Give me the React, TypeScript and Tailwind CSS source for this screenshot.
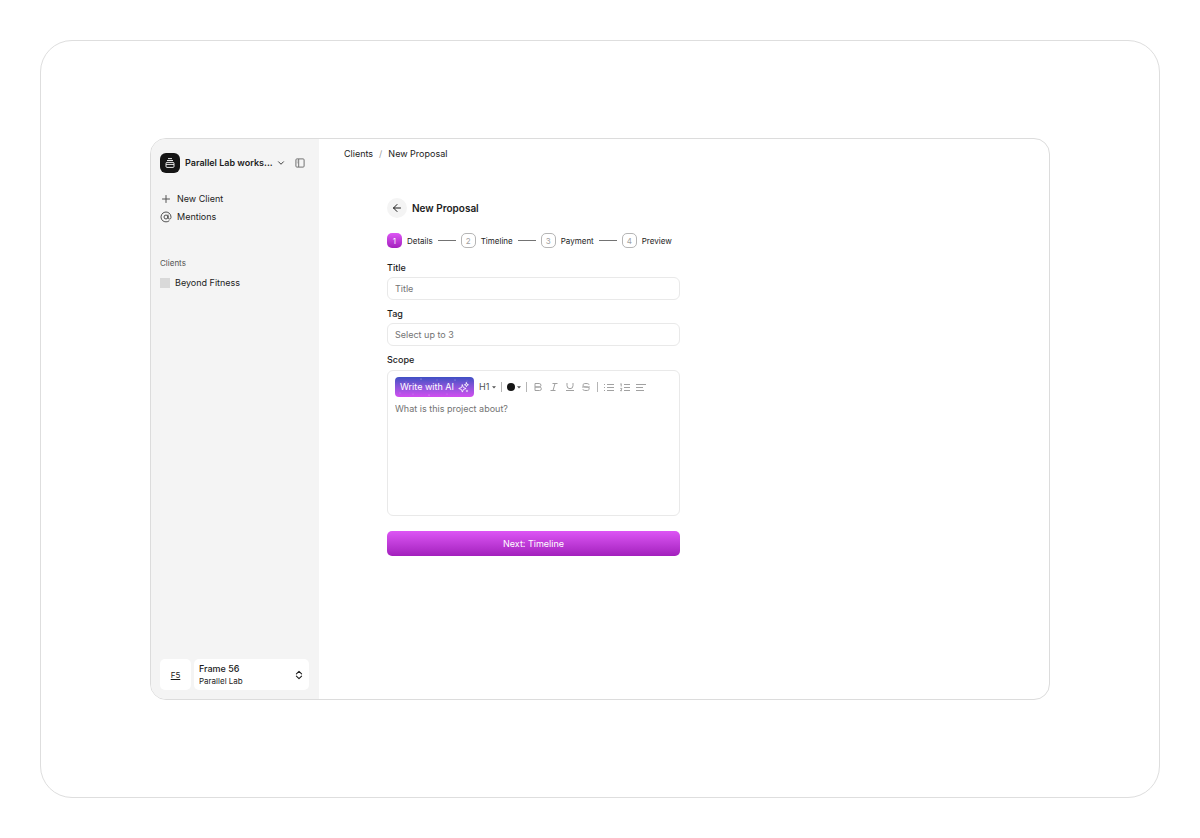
import React from "react";
import { ArrowLeft, AtSign, ChevronDown, Plus } from "lucide-react";

const steps = [
  { id: 1, label: "Details" },
  { id: 2, label: "Timeline" },
  { id: 3, label: "Payment" },
  { id: 4, label: "Preview" },
];

const formats = [
  {
    name: "Bold",
    icon: <path d="M2 1.5h4.2a1.75 1.75 0 0 1 0 3.5H2zM2 5h4.6a1.75 1.75 0 0 1 0 3.5H2z" />,
  },
  { name: "Italic", icon: <path d="M3.5 1.5h5M1.5 8.5h5M6 1.5l-2 7" /> },
  {
    name: "Underline",
    icon: <path d="M2 1v2.7a3 3 0 0 0 6 0V1M1 8.5h8" />,
  },
  {
    name: "Strikethrough",
    icon: (
      <path d="M8 2.8C7.8 1.8 7 1.5 5 1.5 3.2 1.5 2 1.8 2 3.1S3.2 5 5 5s3.2.4 3.2 1.8S7 8.5 5 8.5s-3-.3-3.2-1.4M1 5h8" />
    ),
  },
];

const lists = [
  {
    name: "Bulleted list",
    icon: <path d="M3 2.5h7M3 5.5h7M3 8.5h7M0 2.5h1M0 5.5h1M0 8.5h1" />,
  },
  {
    name: "Numbered list",
    icon: <path d="M4 2.5h6M4 5.5h6M4 8.5h6M1.2 1.5v3M0.4 2h.8M0.3 6.4h1.5v.7L0.4 8.7h1.6" />,
  },
  { name: "Align left", icon: <path d="M0 2.5h10M0 5.5h7M0 8.5h8" /> },
];

function ToolIcon({ name, children }: { name: string; children: React.ReactNode }) {
  return (
    <button type="button" aria-label={name} className="text-neutral-400">
      <svg
        viewBox="0 0 10 10"
        className="size-[10px]"
        fill="none"
        stroke="currentColor"
        strokeWidth="1"
      >
        {children}
      </svg>
    </button>
  );
}

function Caret() {
  return (
    <svg viewBox="0 0 4 3" className="w-1 h-[3px]" fill="#555">
      <path d="M0 0.3h4L2 2.6z" />
    </svg>
  );
}

function Divider() {
  return <span className="w-px h-[10px] bg-[#b5b5b5]" />;
}

function Sidebar() {
  return (
    <aside className="w-[168px] shrink-0 bg-[#f4f4f4] pl-[9px] pr-[10px] pt-[14px] pb-[9px] flex flex-col">
      <div className="flex items-center">
        <span className="size-5 rounded-md bg-[#151515] flex items-center justify-center">
          <svg viewBox="0 0 12 12" className="size-3" fill="none" stroke="#fff" strokeWidth="0.9">
            <path d="M4 1.6h4M3 3.5h6" />
            <path d="M3 5.4h6a1 1 0 0 1 1 1v3a1 1 0 0 1-1 1H3a1 1 0 0 1-1-1v-3a1 1 0 0 1 1-1zM2 7.4h8" />
          </svg>
        </span>
        <button
          type="button"
          className="ml-[5px] flex flex-1 items-center justify-between font-semibold whitespace-nowrap"
        >
          Parallel Lab works...
          <ChevronDown size={10} strokeWidth={2} />
        </button>
        <button type="button" aria-label="Toggle sidebar" className="ml-[9px] mr-1 text-neutral-500">
          <svg viewBox="0 0 10 10" className="size-[10px]" fill="none" stroke="currentColor">
            <rect x="0.9" y="0.9" width="8.2" height="8.2" rx="1" />
            <path d="M3.7 1v8" />
            <path d="M1.8 3h1M1.8 4.8h1" strokeWidth="0.6" />
          </svg>
        </button>
      </div>

      <nav className="mt-[17px]">
        <a href="#new" className="flex items-center gap-[5px] h-[18px]">
          <Plus size={12} strokeWidth={2} className="text-neutral-600" />
          New Client
        </a>
        <a href="#mentions" className="flex items-center gap-[5px] h-[18px]">
          <AtSign size={12} strokeWidth={2} className="text-neutral-600" />
          Mentions
        </a>
      </nav>

      <h2 className="mt-[31px] text-[8px] text-neutral-600">Clients</h2>
      <a href="#beyond" className="mt-[6px] flex items-center gap-[5px] h-4">
        <span className="size-[10px] bg-[#d9d9d9]" />
        Beyond Fitness
      </a>

      <div className="mt-auto flex gap-[3px] h-[31px]">
        <a
          href="#frame"
          className="w-[31px] rounded-[5px] bg-white flex items-center justify-center text-[8px] underline"
        >
          F5
        </a>
        <button
          type="button"
          className="flex-1 rounded-[5px] bg-white px-[5px] flex items-center justify-between text-left"
        >
          <span className="flex flex-col">
            <span className="font-medium">Frame 56</span>
            <span className="text-[8px]">Parallel Lab</span>
          </span>
          <svg
            viewBox="0 0 10 10"
            className="size-[10px]"
            fill="none"
            stroke="currentColor"
            strokeWidth="1.1"
            strokeLinecap="round"
            strokeLinejoin="round"
          >
            <path d="M2.4 3.8 5 1.4l2.6 2.4M2.4 6.2 5 8.6l2.6-2.4" />
          </svg>
        </button>
      </div>
    </aside>
  );
}

function Steps() {
  return (
    <ol className="mt-[15px] flex items-center gap-[5px] text-[8px]">
      {steps.map((step) => (
        <React.Fragment key={step.id}>
          {step.id > 1 && <li aria-hidden="true" className="w-[18px] h-px bg-neutral-500" />}
          <li className="flex items-center gap-[5px]">
            <span
              className={
                step.id === 1
                  ? "size-[15px] rounded-[5px] bg-linear-to-b from-[#dd55f5] to-[#a31fbd] text-white flex items-center justify-center"
                  : "size-[15px] rounded-[5px] border border-[#b5b5b5] text-neutral-400 flex items-center justify-center"
              }
            >
              {step.id}
            </span>
            {step.label}
          </li>
        </React.Fragment>
      ))}
    </ol>
  );
}

function Editor() {
  return (
    <div className="mt-1 h-[146px] rounded-[6px] border border-[#e9e9e9] px-[7px] py-[6px] flex flex-col">
      <div className="flex items-center gap-[5px]">
        <button
          type="button"
          className="relative h-5 w-[79px] rounded-[4px] bg-linear-to-b from-[#3d4fc4] to-[#d14df0] text-white flex items-center justify-between px-[5px] whitespace-nowrap"
        >
          <svg
            viewBox="0 0 79 20"
            className="absolute inset-0 size-full"
            fill="#fff"
            fillOpacity="0.6"
            aria-hidden="true"
          >
            <circle cx="26" cy="2" r="0.6" />
            <circle cx="42" cy="3" r="0.4" />
            <circle cx="60" cy="3" r="0.5" />
            <circle cx="72" cy="4" r="0.4" />
            <circle cx="11" cy="5" r="0.4" />
            <circle cx="5" cy="16" r="0.4" />
            <circle cx="18" cy="17" r="0.4" />
            <circle cx="34" cy="18" r="0.5" />
            <circle cx="52" cy="17" r="0.4" />
          </svg>
          Write with AI
          <svg
            viewBox="0 0 12 12"
            className="size-[11px]"
            fill="none"
            stroke="#fff"
            strokeWidth="0.9"
            strokeLinejoin="round"
            strokeLinecap="round"
          >
            <path d="M4.8 3.2 5.9 6 8.8 7.1 5.9 8.2 4.8 11 3.7 8.2 0.8 7.1 3.7 6z" />
            <path d="M9.2 0.8 9.8 2.4 11.4 3 9.8 3.6 9.2 5.2 8.6 3.6 7 3 8.6 2.4z" />
            <path d="M9.8 9v1.6M9 9.8h1.6" strokeWidth="0.7" />
          </svg>
        </button>
        <button type="button" className="flex items-center gap-[3px] text-neutral-600">
          H1
          <Caret />
        </button>
        <Divider />
        <button type="button" aria-label="Text color" className="flex items-center gap-[2px]">
          <span className="size-2 rounded-full bg-[#151515]" />
          <Caret />
        </button>
        <div className="flex items-center gap-[6px]">
          <Divider />
          {formats.map((item) => (
            <ToolIcon key={item.name} name={item.name}>
              {item.icon}
            </ToolIcon>
          ))}
          <Divider />
          {lists.map((item) => (
            <ToolIcon key={item.name} name={item.name}>
              {item.icon}
            </ToolIcon>
          ))}
        </div>
      </div>
      <textarea
        id="scope"
        placeholder="What is this project about?"
        className="mt-[6px] flex-1 resize-none outline-none placeholder:text-neutral-500"
      />
    </div>
  );
}

export default function App() {
  return (
    <main className="min-h-screen bg-white p-10 flex font-['Inter',sans-serif] text-[9px] leading-[12px] text-[#1c1c1c]">
      <section className="flex-1 rounded-[32px] border border-[#dedede] px-[109px] py-[97px] flex">
        <div className="flex-1 rounded-2xl border border-[#dcdcdc] overflow-hidden flex">
          <Sidebar />
          <div className="flex-1 pl-[25px] pt-[9px]">
            <nav className="flex gap-[6px]">
              <a href="#clients">Clients</a>
              <span className="text-neutral-400">/</span>
              <a href="#proposal">New Proposal</a>
            </nav>

            <form className="ml-[43px] mt-[38px] w-[293px] flex flex-col">
              <div className="flex items-center gap-[5px]">
                <button
                  type="button"
                  aria-label="Back"
                  className="size-5 rounded-full bg-[#f4f4f4] flex items-center justify-center"
                >
                  <ArrowLeft size={12} strokeWidth={2} />
                </button>
                <h1 className="text-[10px] font-semibold">New Proposal</h1>
              </div>

              <Steps />

              <label htmlFor="title" className="mt-[14px] font-medium">
                Title
              </label>
              <input
                id="title"
                placeholder="Title"
                className="mt-[3px] h-[23px] rounded-[6px] border border-[#e9e9e9] px-[7px] outline-none placeholder:text-neutral-500"
              />
              <label htmlFor="tag" className="mt-2 font-medium">
                Tag
              </label>
              <input
                id="tag"
                placeholder="Select up to 3"
                className="mt-[3px] h-[23px] rounded-[6px] border border-[#e9e9e9] px-[7px] outline-none placeholder:text-neutral-500"
              />
              <label htmlFor="scope" className="mt-2 font-medium">
                Scope
              </label>
              <Editor />

              <button
                type="button"
                className="mt-[15px] h-[25px] rounded-[5px] bg-linear-to-b from-[#dd55f5] to-[#a31fbd] text-white"
              >
                Next: Timeline
              </button>
            </form>
          </div>
        </div>
      </section>
    </main>
  );
}
